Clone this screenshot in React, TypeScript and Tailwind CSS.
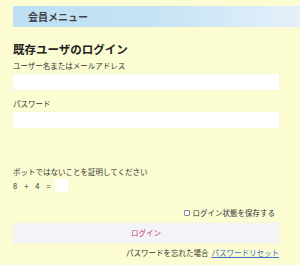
import React from "react";

export default function App() {
  return (
    <div
      className="w-[300px] h-[265px] overflow-hidden bg-[#fbfcd2] text-[#333] flex flex-col"
      style={{ fontFamily: '"Noto Sans CJK JP", "Noto Sans", sans-serif' }}
    >
      <div className="ml-[13px] mt-[6px] h-[21px] flex items-center pl-[15px] bg-gradient-to-r from-[#bde0f4] via-[#c6e3f4] to-[#e4f0fa]">
        <span className="text-[10px] font-bold leading-none text-[#444]">会員メニュー</span>
      </div>
      <div className="pl-[13px] w-[279px] flex flex-col">
        <div className="mt-[17px] text-[11.5px] font-bold leading-none text-[#222]">既存ユーザのログイン</div>
        <div className="mt-[6px] text-[7.5px] leading-none">ユーザー名またはメールアドレス</div>
        <div className="mt-[5px] h-[16px] bg-white shadow-[0_0_1px_#e5e5d0]"></div>
        <div className="mt-[10px] text-[7.5px] leading-none">パスワード</div>
        <div className="mt-[4px] h-[16px] bg-white shadow-[0_0_1px_#e5e5d0]"></div>
        <div className="mt-[40px] text-[7.5px] leading-none">ボットではないことを証明してください</div>
        <div className="mt-[4px] flex items-center text-[7.5px] leading-none">
          <span>8</span>
          <span className="ml-[7px]">+</span>
          <span className="ml-[7px]">4</span>
          <span className="ml-[7px]">=</span>
          <div className="ml-[4px] w-[13px] h-[13px] bg-white"></div>
        </div>
        <div className="mt-[17px] flex justify-end items-center text-[7.5px] leading-none pr-[4px]">
          <span className="w-[6px] h-[6px] border border-[#888] rounded-[1px] bg-white mr-[3px]"></span>
          <span>ログイン状態を保存する</span>
        </div>
        <div className="mt-[6px] h-[20px] bg-[#f3f4f8] flex items-center justify-center shadow-[0_0_1px_#e0e0d0]">
          <span className="text-[7.5px] leading-none text-[#c2347a]">ログイン</span>
        </div>
        <div className="mt-[6px] flex justify-end text-[7.5px] leading-none">
          <span>パスワードを忘れた場合 </span>
          <span className="text-[#3b6fc4] underline ml-[3px]">パスワードリセット</span>
        </div>
      </div>
    </div>
  );
}
